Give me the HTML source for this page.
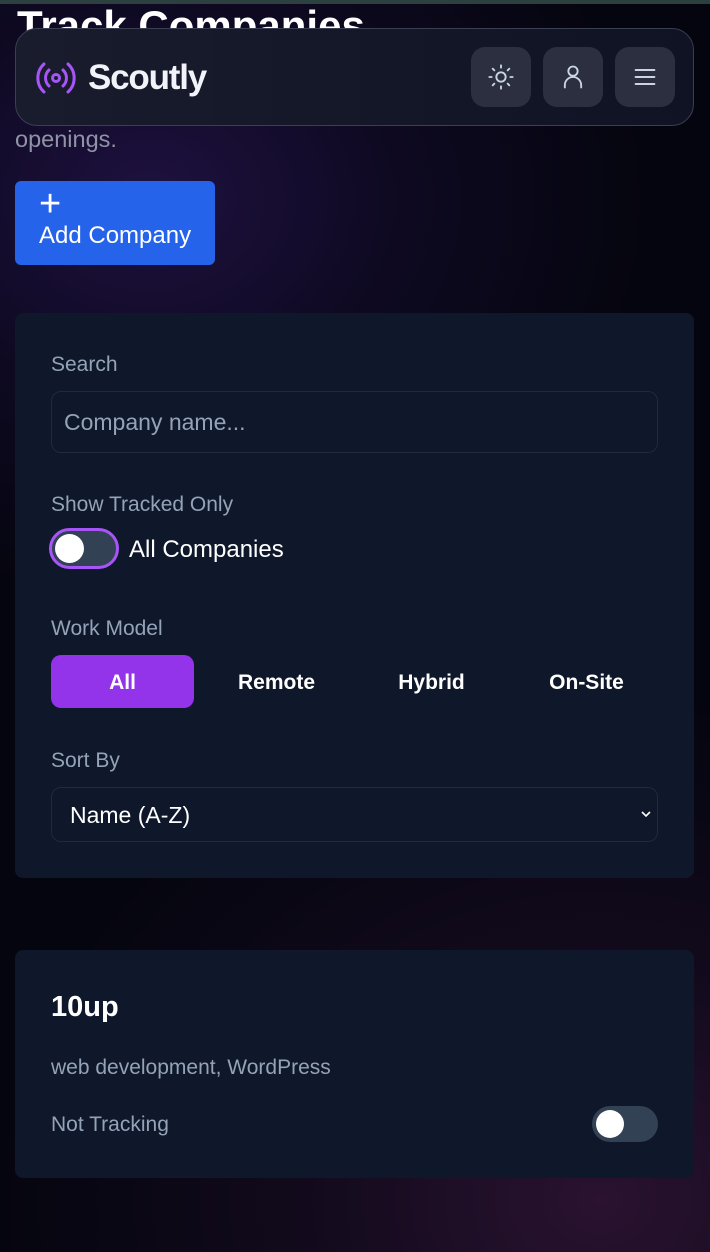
<!DOCTYPE html>
<html><head><style>
*{box-sizing:border-box;margin:0;padding:0}
body{width:710px;height:1252px;overflow:hidden;font-family:"Liberation Sans",sans-serif;color:#fff;
background:radial-gradient(ellipse 500px 400px at 150px 200px,#1e1140 0%,rgba(20,12,45,.6) 50%,transparent 100%),
radial-gradient(ellipse 600px 500px at 600px 1200px,#2a1230 0%,rgba(30,15,40,.5) 50%,transparent 100%),#05050f;position:relative}
.topline{position:absolute;top:0;left:0;width:710px;height:4px;background:#2d4040}
h1{position:absolute;left:17px;top:2px;font-size:42px;font-weight:bold;line-height:48px;height:30px;overflow:hidden}
.nav{position:absolute;left:15px;top:28px;width:679px;height:98px;border-radius:22px;border:1px solid #3a3f52;
background:linear-gradient(90deg,#181c2c,#0f1324);}
.logo{position:absolute;left:20px;top:29px;display:flex;align-items:center;gap:12px}
.logo span{font-size:35px;font-weight:bold;letter-spacing:-1.2px;color:#f1f3f8}
.ib{position:absolute;top:18px;width:60px;height:60px;border-radius:14px;background:#2b2f3f;display:flex;align-items:center;justify-content:center}
.sub{position:absolute;left:15px;top:126px;font-size:23.5px;color:#8e93a6}
.add{position:absolute;left:15px;top:181px;width:200px;height:84px;background:#2563eb;border-radius:6px;padding:10px 0 0 24px;font-size:24px;white-space:nowrap}
.card{position:absolute;left:15px;width:679px;background:#0f172a;border-radius:8px}
.lbl{position:absolute;left:36px;font-size:21px;color:#94a3b8}
.inp{position:absolute;left:36px;width:607px;border:1px solid #1f2a3d;border-radius:10px}
.tog{position:absolute;width:66px;height:36px;border-radius:18px;background:#334155}
.tog i{position:absolute;left:4px;top:4px;width:28px;height:28px;border-radius:50%;background:#fff}
.wm{position:absolute;top:342px;height:53px;width:143px;font-size:21px;font-weight:bold;display:flex;align-items:center;justify-content:center;border-radius:10px;padding-top:2px}
</style></head><body>
<div class="topline"></div>
<h1>Track Companies</h1>
<div class="sub">openings.</div>
<div class="add"><div style="font-size:38px;line-height:26px;font-weight:300">+</div><div style="margin-top:5px">Add Company</div></div>
<div class="nav">
 <div class="logo"><svg width="40" height="36" viewBox="0 0 40 36" fill="none" stroke="#a855f7" stroke-width="3" stroke-linecap="round"><circle cx="20" cy="18" r="3.5"/><path d="M13 10a11 11 0 0 0 0 16M27 10a11 11 0 0 1 0 16M8 4a19 19 0 0 0 0 28M32 4a19 19 0 0 1 0 28"/></svg><span>Scoutly</span></div>
 <div class="ib" style="left:455px"><svg width="28" height="28" viewBox="0 0 24 24" fill="none" stroke="#cbd5e1" stroke-width="1.6" stroke-linecap="round"><circle cx="12" cy="12" r="4"/><path d="M12 2v2M12 20v2M4.9 4.9l1.4 1.4M17.7 17.7l1.4 1.4M2 12h2M20 12h2M4.9 19.1l1.4-1.4M17.7 6.3l1.4-1.4"/></svg></div>
 <div class="ib" style="left:527px"><svg width="28" height="28" viewBox="0 0 24 24" fill="none" stroke="#cbd5e1" stroke-width="1.6" stroke-linecap="round"><circle cx="12" cy="7" r="4"/><path d="M5 21v-2a6 6 0 0 1 14 0v2"/></svg></div>
 <div class="ib" style="left:599px"><svg width="28" height="28" viewBox="0 0 24 24" fill="none" stroke="#cbd5e1" stroke-width="1.8" stroke-linecap="round"><path d="M4 6h16M4 12h16M4 18h16"/></svg></div>
</div>
<div class="card" style="top:313px;height:565px">
 <div class="lbl" style="top:40px">Search</div>
 <div class="inp" style="top:78px;height:62px;padding:17px 12px;font-size:23px;color:#94a3b8">Company name...</div>
 <div class="lbl" style="top:180px">Show Tracked Only</div>
 <div class="tog" style="left:34px;top:215px;border:3px solid #a855f7;width:70px;height:41px;border-radius:21px"><i style="left:3px;top:3px;width:29px;height:29px"></i></div>
 <div style="position:absolute;left:114px;top:223px;font-size:24px">All Companies</div>
 <div class="lbl" style="top:304px">Work Model</div>
 <div class="wm" style="left:36px;background:#9333ea">All</div>
 <div class="wm" style="left:190px">Remote</div>
 <div class="wm" style="left:345px">Hybrid</div>
 <div class="wm" style="left:500px">On-Site</div>
 <div class="lbl" style="top:436px">Sort By</div>
 <div class="inp" style="top:474px;height:55px;padding:14px 18px;font-size:23px">Name (A-Z)<svg style="position:absolute;right:4px;top:21px" width="14" height="10" viewBox="0 0 14 10" fill="none" stroke="#fff" stroke-width="1.6"><path d="M3 3l4 4 4-4"/></svg></div>
</div>
<div class="card" style="top:950px;height:228px">
 <div style="position:absolute;left:36px;top:41px;font-size:29px;font-weight:bold">10up</div>
 <div class="lbl" style="top:106px">web development, WordPress</div>
 <div class="lbl" style="top:163px">Not Tracking</div>
 <div class="tog" style="left:577px;top:156px"><i></i></div>
</div>
</body></html>
